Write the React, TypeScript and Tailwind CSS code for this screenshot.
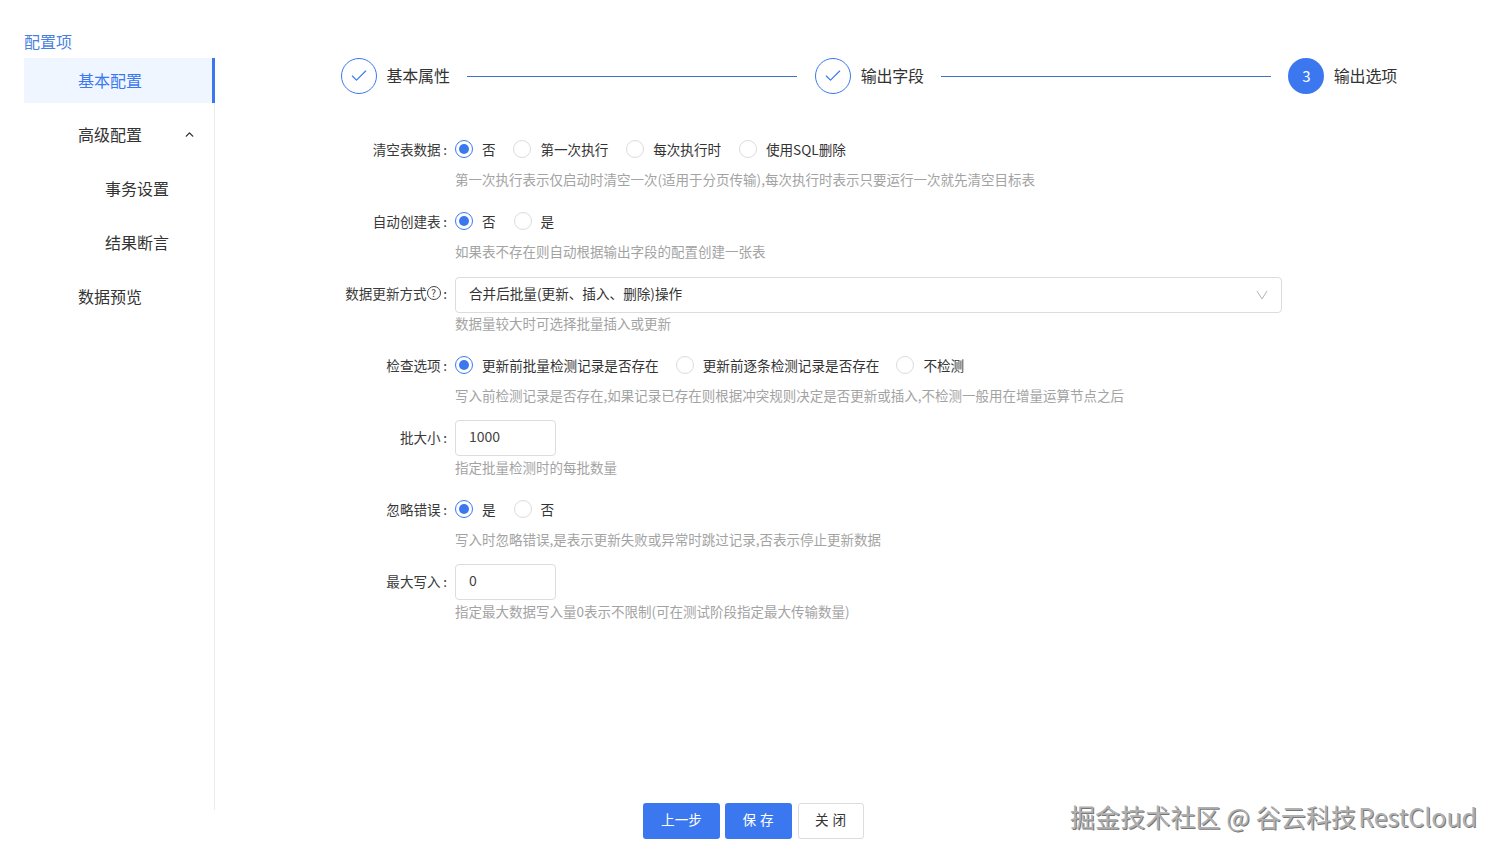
import React from "react";
import { Check, ChevronUp } from "lucide-react";

const FONT = "font-['Noto_Sans_CJK_SC','Noto_Sans',sans-serif]";

function Radio({ label, checked }: { label: string; checked?: boolean }) {
  return (
    <label className="flex items-center gap-[9px]">
      <span
        className={
          checked
            ? "flex h-[18px] w-[18px] items-center justify-center rounded-full border border-[#3b78f0] bg-white"
            : "flex h-[18px] w-[18px] items-center justify-center rounded-full border border-[#dcdcdc] bg-white"
        }
      >
        {checked && <span className="h-[10px] w-[10px] rounded-full bg-[#3b78f0]" />}
      </span>
      <span>{label}</span>
    </label>
  );
}

function Row({
  label,
  hint,
  help,
  children,
}: {
  label: string;
  hint: string;
  help?: boolean;
  children: React.ReactNode;
}) {
  return (
    <div className="mb-[12px] flex">
      <div className="flex h-[36px] w-[114px] items-center justify-end pr-[8px] text-[#3a3a3a]">
        <span>{label}</span>
        {help && (
          <span className="flex h-[14px] w-[14px] items-center justify-center rounded-full border border-[#444] text-[10px] leading-none">
            ?
          </span>
        )}
        <span className="ml-[2.5px]">:</span>
      </div>
      <div className="flex-1">
        <div className="flex h-[36px] items-center text-[#333]">{children}</div>
        <div className="h-[24px] text-[13.5px] leading-[24px] text-[#a3a3a3]">{hint}</div>
      </div>
    </div>
  );
}

function NumberBox({ value }: { value: string }) {
  return (
    <div className="mt-[1px] -mb-[1px] flex h-[36px] w-[101px] items-center rounded-[4px] border border-[#dcdcdc] pb-[4px] pl-[13px] text-[14px] text-[#444]">
      {value}
    </div>
  );
}

function Step({ n, label, done }: { n: number; label: string; done: boolean }) {
  return (
    <div className="flex items-center">
      <div
        className={
          done
            ? "flex h-[36px] w-[36px] items-center justify-center rounded-full border border-[#3b78f0] text-[#3b78f0]"
            : "flex h-[36px] w-[36px] items-center justify-center rounded-full bg-[#3b78f0] text-[15px] text-white"
        }
      >
        {done ? <Check size={20} strokeWidth={1.4} /> : n}
      </div>
      <span className="ml-[9.5px] pb-[2px] text-[16px] tracking-[-0.2px] text-[#333]">{label}</span>
    </div>
  );
}

export default function App() {
  return (
    <div className={`relative h-[856px] w-[1502px] overflow-hidden bg-white text-[13.6px] ${FONT}`}>
      <div className="flex h-[805px]">
        <aside className="w-[215px] pl-[24px] pt-[32px]">
          <div className="h-[20px] text-[16px] leading-[18px] text-[#4a7fe0]">配置项</div>
          <div className="h-[752px] border-r border-[#ececec]">
            <div className="mt-[6px] -mr-[1px] flex h-[45px] items-center border-r-[3px] border-[#3b78f0] bg-[#f0f6ff] pb-[2px] pl-[54px] text-[16px] text-[#3b78f0]">
              基本配置
            </div>
            <div className="text-[16px] text-[#333]">
              <div className="mt-[5px] flex h-[54px] items-center justify-between pb-[2px] pl-[54px] pr-[18px]">
                <span>高级配置</span>
                <ChevronUp size={13} strokeWidth={2.6} />
              </div>
              <div className="flex h-[54px] items-center pb-[2px] pl-[81px]">事务设置</div>
              <div className="flex h-[54px] items-center pb-[2px] pl-[81px]">结果断言</div>
              <div className="flex h-[54px] items-center pb-[2px] pl-[54px]">数据预览</div>
            </div>
          </div>
        </aside>

        <main className="flex-1 pl-[126px] pt-[58px]">
          <div className="flex w-[1056px] items-center">
            <Step n={1} label="基本属性" done />
            <div className="ml-[17px] mr-[18px] h-px flex-1 bg-[#3f73c8]" />
            <Step n={2} label="输出字段" done />
            <div className="mx-[17px] h-px flex-1 bg-[#3f73c8]" />
            <Step n={3} label="输出选项" done={false} />
          </div>

          <form className="mt-[37px] w-[941px]">
            <Row label="清空表数据" hint="第一次执行表示仅启动时清空一次(适用于分页传输),每次执行时表示只要运行一次就先清空目标表">
              <div className="flex gap-[17.8px]">
                <Radio label="否" checked />
                <Radio label="第一次执行" />
                <Radio label="每次执行时" />
                <Radio label="使用SQL删除" />
              </div>
            </Row>
            <Row label="自动创建表" hint="如果表不存在则自动根据输出字段的配置创建一张表">
              <div className="flex gap-[18px]">
                <Radio label="否" checked />
                <Radio label="是" />
              </div>
            </Row>
            <Row label="数据更新方式" help hint="数据量较大时可选择批量插入或更新">
              <div className="mt-[2px] -mb-[2px] flex h-[36px] w-[827px] items-center justify-between rounded-[4px] border border-[#dcdcdc] pb-[4px] pl-[13px] pr-[13px] text-[#333]">
                <span>合并后批量(更新、插入、删除)操作</span>
                <svg width="12" height="10" viewBox="0 0 12 10" fill="none" stroke="#b5b5b5" strokeWidth="1" className="mt-[4px]">
                  <polyline points="1,1 6,9 11,1" />
                </svg>
              </div>
            </Row>
            <Row label="检查选项" hint="写入前检测记录是否存在,如果记录已存在则根据冲突规则决定是否更新或插入,不检测一般用在增量运算节点之后">
              <div className="flex gap-[17px]">
                <Radio label="更新前批量检测记录是否存在" checked />
                <Radio label="更新前逐条检测记录是否存在" />
                <Radio label="不检测" />
              </div>
            </Row>
            <Row label="批大小" hint="指定批量检测时的每批数量">
              <NumberBox value="1000" />
            </Row>
            <Row label="忽略错误" hint="写入时忽略错误,是表示更新失败或异常时跳过记录,否表示停止更新数据">
              <div className="flex gap-[18px]">
                <Radio label="是" checked />
                <Radio label="否" />
              </div>
            </Row>
            <Row label="最大写入" hint="指定最大数据写入量0表示不限制(可在测试阶段指定最大传输数量)">
              <NumberBox value="0" />
            </Row>
          </form>
        </main>
      </div>

      <footer className="-mt-[2px] flex justify-center pl-[5px] text-[13.6px]">
        <button className="h-[36px] w-[77px] rounded-[3px] bg-[#3b78f0] pb-[3px] text-white">上一步</button>
        <button className="ml-[5px] h-[36px] w-[67px] rounded-[3px] bg-[#3b78f0] pb-[3px] pl-[3px] tracking-[4px] text-white">保存</button>
        <button className="ml-[6px] h-[36px] w-[66px] rounded-[3px] border border-[#dcdcdc] bg-white pb-[3px] pl-[3px] tracking-[4px] text-[#333]">关闭</button>
      </footer>

      <div className="absolute left-[1070px] top-[798px] whitespace-nowrap text-[25px] leading-[36px] tracking-[0.1px] text-[#b0b0b0] [text-shadow:1px_1px_0_#777]">
        掘金技术社区 @ 谷云科技<span className="ml-[2px] tracking-normal">RestCloud</span>
      </div>
    </div>
  );
}
